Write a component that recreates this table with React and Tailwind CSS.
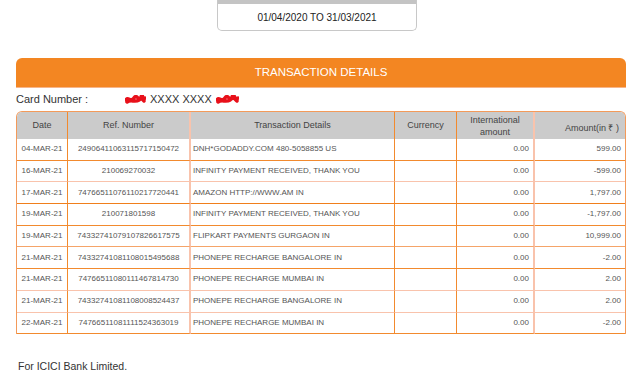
import React from "react";

const rows = [
  { date: "04-MAR-21", ref: "24906411063115717150472", desc: "DNH*GODADDY.COM 480-5058855 US", intl: "0.00", amt: "599.00", line: "border-b-[#f28a2e]" },
  { date: "16-MAR-21", ref: "210069270032", desc: "INFINITY PAYMENT RECEIVED, THANK YOU", intl: "0.00", amt: "-599.00", line: "border-b-[#f9c3ac]" },
  { date: "17-MAR-21", ref: "74766511076110217720441", desc: "AMAZON HTTP://WWW.AM IN", intl: "0.00", amt: "1,797.00", line: "border-b-[#f07f1c]" },
  { date: "19-MAR-21", ref: "210071801598", desc: "INFINITY PAYMENT RECEIVED, THANK YOU", intl: "0.00", amt: "-1,797.00", line: "border-b-[#f28a2e]" },
  { date: "19-MAR-21", ref: "74332741079107826617575", desc: "FLIPKART PAYMENTS GURGAON IN", intl: "0.00", amt: "10,999.00", line: "border-b-[#f5a469]" },
  { date: "21-MAR-21", ref: "74332741081108015495688", desc: "PHONEPE RECHARGE BANGALORE IN", intl: "0.00", amt: "-2.00", line: "border-b-[#f28a2e]" },
  { date: "21-MAR-21", ref: "74766511080111467814730", desc: "PHONEPE RECHARGE MUMBAI IN", intl: "0.00", amt: "2.00", line: "border-b-[#f9c3ac]" },
  { date: "21-MAR-21", ref: "74332741081108008524437", desc: "PHONEPE RECHARGE BANGALORE IN", intl: "0.00", amt: "2.00", line: "border-b-[#f9c3ac]" },
  { date: "22-MAR-21", ref: "74766511081111524363019", desc: "PHONEPE RECHARGE MUMBAI IN", intl: "0.00", amt: "-2.00", line: "border-b-[#f28a2e]" },
];

function Scribble({ width }) {
  return (
    <svg width={width} height="9" viewBox={`0 0 ${width} 9`} className="inline-block align-middle">
      <path
        d={`M1 5 C3 1, 6 8, 9 3 S14 8, 16 2 S${width - 4} 7, ${width - 1} 3 M2 7 C6 4, 10 8, 14 5 S${width - 6} 2, ${width - 2} 6`}
        stroke="#e8101a"
        strokeWidth="3.5"
        fill="none"
        strokeLinecap="round"
      />
    </svg>
  );
}

export default function App() {
  return (
    <div className="relative h-[382px] w-[640px] overflow-hidden bg-white font-['Liberation_Sans',Arial,sans-serif]">
      <div className="ml-[217px] flex h-[31px] w-[200px] flex-col overflow-hidden rounded-b-[5px] border border-t-0 border-[#c8c8c8]">
        <div className="h-[4px] bg-[#c4c4c4]" />
        <div className="flex flex-1 items-center justify-center text-[10px] text-[#222]">01/04/2020 TO 31/03/2021</div>
      </div>

      <div className="ml-4 mt-[27px] w-[610px]">
        <div className="flex h-[30px] items-center justify-center rounded-t-[6px] border-b border-[#f7b58a] bg-[#f38622] text-[11.5px] text-white">
          TRANSACTION DETAILS
        </div>
        <div className="flex h-[23px] items-center text-[11px] text-[#333]">
          <span className="w-[109px]">Card Number :</span>
          <Scribble width={21} />
          <span className="mx-[4px]">XXXX XXXX</span>
          <Scribble width={23} />
        </div>

        <table className="w-[610px] table-fixed border-separate border-spacing-0 overflow-hidden rounded-t-[6px] border-x border-t border-x-[#f39a5a] border-t-[#f39a5a] text-[8px] text-[#555]">
          <colgroup>
            <col className="w-[51px]" />
            <col className="w-[123px]" />
            <col className="w-[204px]" />
            <col className="w-[62px]" />
            <col className="w-[78px]" />
            <col className="w-[90px]" />
          </colgroup>
          <thead>
            <tr className="h-[27px] bg-[#cbcbcb] text-[9px] text-[#444]">
              <th className="border-r border-[#f28a2e] font-normal">Date</th>
              <th className="border-r-2 border-[#f9c3ac] font-normal">Ref. Number</th>
              <th className="border-r border-[#f28a2e] font-normal">Transaction Details</th>
              <th className="border-r border-[#f28a2e] font-normal">Currency</th>
              <th className="border-r-2 border-[#f9c3ac] font-normal leading-[12px]">
                International
                <br />
                amount
              </th>
              <th className="pr-[6px] pt-[6px] text-right font-normal">Amount(in ₹ )</th>
            </tr>
          </thead>
          <tbody>
            {rows.map((r, i) => (
              <tr key={i} className="h-[21.7px]">
                <td className={`border-b border-r border-r-[#f28a2e] text-center ${r.line}`}>{r.date}</td>
                <td className={`border-b border-r-2 border-r-[#f9c3ac] text-center ${r.line}`}>{r.ref}</td>
                <td className={`truncate border-b border-r border-r-[#f28a2e] pl-[2px] ${r.line}`}>{r.desc}</td>
                <td className={`border-b border-r border-r-[#f28a2e] ${r.line}`} />
                <td className={`border-b border-r-2 border-r-[#f9c3ac] pr-[4px] text-right ${r.line}`}>{r.intl}</td>
                <td className={`border-b pr-[4px] text-right ${r.line}`}>{r.amt}</td>
              </tr>
            ))}
          </tbody>
        </table>
      </div>

      <div className="ml-[18px] mt-[25px] text-[10.5px] text-[#333]">For ICICI Bank Limited.</div>
    </div>
  );
}
